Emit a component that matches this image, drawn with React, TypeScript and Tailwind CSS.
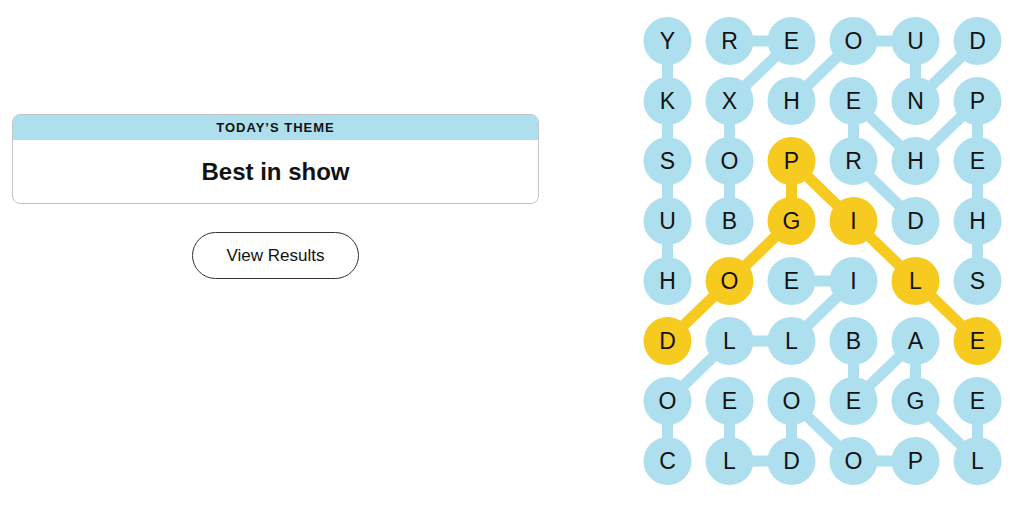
const GRID = [
  'YREOUD',
  'KXHENP',
  'SOPRHE',
  'UBGIDH',
  'HOEILS',
  'DLLBAE',
  'OEOEGE',
  'CLDOPL',
]

// found words, as [row, col] paths
const WORDS: [number, number][][] = [
  [[4, 0], [3, 0], [2, 0], [1, 0], [0, 0]], // HUSKY
  [[3, 1], [2, 1], [1, 1], [0, 2], [0, 1]], // BOXER
  [[1, 2], [0, 3], [0, 4], [1, 4], [0, 5]], // HOUND
  [[4, 5], [3, 5], [2, 5], [1, 5], [2, 4], [1, 3], [2, 3], [3, 4]], // SHEPHERD
  [[7, 0], [6, 0], [5, 1], [5, 2], [4, 3], [4, 2]], // COLLIE
  [[5, 3], [6, 3], [5, 4], [6, 4], [7, 5], [6, 5]], // BEAGLE
  [[7, 4], [7, 3], [6, 2], [7, 2], [7, 1], [6, 1]], // POODLE
]

const SPANGRAM: [number, number][] = [[5, 0], [4, 1], [3, 2], [2, 2], [3, 3], [4, 4], [5, 5]] // DOGPILE

const BLUE = '#aedfee'
const YELLOW = '#f7ca1f'

const cx = (c: number) => 37.5 + c * 62
const cy = (r: number) => 41 + r * 60

function Board() {
  const spanSet = new Set(SPANGRAM.map(([r, c]) => `${r}-${c}`))

  const line = (path: [number, number][], color: string, key: string) => (
    <polyline
      key={key}
      points={path.map(([r, c]) => `${cx(c)},${cy(r)}`).join(' ')}
      fill="none"
      stroke={color}
      strokeWidth={11}
      strokeLinejoin="round"
      strokeLinecap="round"
    />
  )

  return (
    <svg width={394} height={509} className="ml-[91px] shrink-0">
      {WORDS.map((w, i) => line(w, BLUE, `w${i}`))}
      {line(SPANGRAM, YELLOW, 'span')}
      {GRID.map((row, r) =>
        row.split('').map((ch, c) => (
          <g key={`${r}-${c}`}>
            <circle cx={cx(c)} cy={cy(r)} r={24} fill={spanSet.has(`${r}-${c}`) ? YELLOW : BLUE} />
            <text
              x={cx(c)}
              y={cy(r) + 8}
              textAnchor="middle"
              fontSize={23}
              fill="#121212"
              fontFamily="'Liberation Sans', Arial, sans-serif"
            >
              {ch}
            </text>
          </g>
        )),
      )}
    </svg>
  )
}

export default function App() {
  return (
    <div className="flex h-[509px] w-[1024px] overflow-hidden bg-white pl-3 font-['Liberation_Sans',Arial,sans-serif] text-[#121212]">
      {/* theme card + results button */}
      <div className="flex w-[527px] shrink-0 flex-col items-center pt-[114px]">
        <div className="w-full overflow-hidden rounded-lg border border-[#c4c4c4]">
          <div className="flex h-[25px] items-center justify-center bg-[#aedfee] text-[13px] font-bold tracking-[1px]">
            TODAY’S THEME
          </div>
          <div className="flex h-[63px] items-center justify-center text-[24px] font-bold">
            Best in show
          </div>
        </div>
        <button
          type="button"
          className="mt-[28px] flex h-[47px] w-[167px] items-center justify-center rounded-full border border-[#333] bg-white text-[17px] text-[#121212]"
        >
          View Results
        </button>
      </div>

      {/* strands board */}
      <Board />
    </div>
  )
}
